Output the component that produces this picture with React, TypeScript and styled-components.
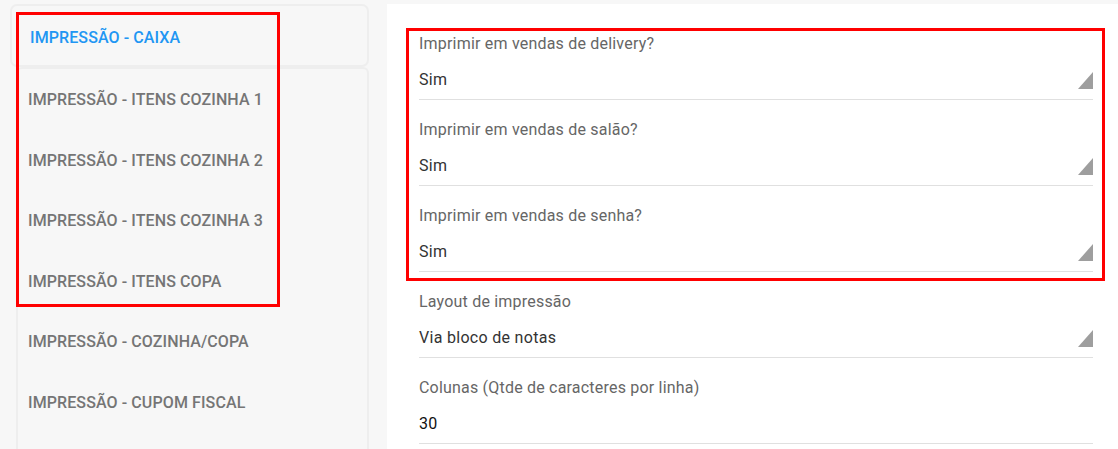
import React from "react";
import styled, { createGlobalStyle } from "styled-components";

const Global = createGlobalStyle`
  html, body { margin: 0; padding: 0; background: #f7f7f7; }
  body { font-family: Roboto, "Liberation Sans", Arial, sans-serif; }
  * { box-sizing: border-box; }
`;

const Page = styled.div`
  position: relative;
  display: flex;
  width: 1118px;
  height: 449px;
  overflow: hidden;
  background: #f7f7f7;
`;

const Sidebar = styled.nav`
  width: 369px;
  flex: none;
  padding-top: 4px;
  display: flex;
  flex-direction: column;
`;

const ActiveTab = styled.div`
  margin-left: 10px;
  height: 63px;
  border: 2px solid #eeeeee;
  border-radius: 7px;
  display: flex;
  align-items: center;
  padding-left: 18px;
  padding-top: 3px;
  font-size: 16px;
  letter-spacing: 0.1px;
  font-weight: 500;
  color: #2196f3;
  text-transform: uppercase;
`;

const TabList = styled.div`
  margin-left: 16px;
  flex: 1;
  border: 2px solid #eeeeee;
  border-bottom: none;
  border-radius: 6px 6px 0 0;
  display: flex;
  flex-direction: column;
`;

const TabItem = styled.div`
  height: 60.5px;
  flex: none;
  display: flex;
  align-items: center;
  padding-left: 10px;
  font-size: 16px;
  letter-spacing: 0.1px;
  font-weight: 500;
  color: #757575;
  text-transform: uppercase;
  &:first-child {
    height: 61px;
  }
`;

const Panel = styled.main`
  flex: 1;
  margin-left: 18px;
  margin-top: 4px;
  background: #ffffff;
  padding: 10px 25px 0 32px;
`;

const Field = styled.div`
  padding-top: 20px;
  padding-bottom: 9px;
  border-bottom: 1px solid #e0e0e0;
  display: flex;
  flex-direction: column;
  gap: 16px;
`;

const Label = styled.div`
  font-size: 16px;
  letter-spacing: 0.2px;
  line-height: 20px;
  color: #666666;
`;

const ValueRow = styled.div`
  display: flex;
  align-items: center;
  justify-content: space-between;
  height: 20px;
`;

const Value = styled.span<{ $dark?: boolean }>`
  font-size: 16px;
  letter-spacing: 0.3px;
  line-height: 20px;
  color: ${(p) => (p.$dark ? "#111111" : "#333333")};
`;

const Marker = styled.div<{ $left: number; $top: number; $w: number; $h: number }>`
  position: absolute;
  left: ${(p) => p.$left}px;
  top: ${(p) => p.$top}px;
  width: ${(p) => p.$w}px;
  height: ${(p) => p.$h}px;
  border: 3px solid #ff0000;
  pointer-events: none;
`;

const Caret = () => (
  <svg width="15" height="17" viewBox="0 0 15 17" style={{ marginTop: 1 }}>
    <polygon points="15,0 15,17 0,17" fill="#9e9e9e" />
  </svg>
);

const tabs = [
  "Impressão - Itens Cozinha 1",
  "Impressão - Itens Cozinha 2",
  "Impressão - Itens Cozinha 3",
  "Impressão - Itens Copa",
  "Impressão - Cozinha/Copa",
  "Impressão - Cupom Fiscal",
];

const fields: { label: string; value: string; select: boolean }[] = [
  { label: "Imprimir em vendas de delivery?", value: "Sim", select: true },
  { label: "Imprimir em vendas de salão?", value: "Sim", select: true },
  { label: "Imprimir em vendas de senha?", value: "Sim", select: true },
  { label: "Layout de impressão", value: "Via bloco de notas", select: true },
  { label: "Colunas (Qtde de caracteres por linha)", value: "30", select: false },
];

export default function App() {
  return (
    <>
      <Global />
      <Page>
        <Sidebar>
          <ActiveTab>Impressão - Caixa</ActiveTab>
          <TabList>
            {tabs.map((t) => (
              <TabItem key={t}>{t}</TabItem>
            ))}
          </TabList>
        </Sidebar>
        <Panel>
          {fields.map((f) => (
            <Field key={f.label}>
              <Label>{f.label}</Label>
              <ValueRow>
                <Value $dark={!f.select}>{f.value}</Value>
                {f.select && <Caret />}
              </ValueRow>
            </Field>
          ))}
        </Panel>
        <Marker $left={16} $top={12} $w={264} $h={295} />
        <Marker $left={406} $top={28} $w={699} $h={253} />
      </Page>
    </>
  );
}
